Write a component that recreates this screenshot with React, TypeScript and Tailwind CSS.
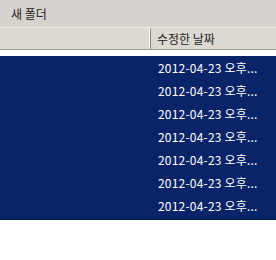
const rows = Array.from({ length: 7 })

export default function App() {
  return (
    <div className="w-[276px] h-[260px] bg-white overflow-hidden font-['Noto_Sans_CJK_KR',sans-serif] text-[12px] leading-none">
      {/* 도구 모음 */}
      <div className="h-[27px] bg-[#d6d3ce] flex items-center pl-[11px] text-[#222]">새 폴더</div>
      <div className="h-px bg-[#eeece8]" />
      {/* 열 머리글 */}
      <div className="h-[22px] bg-[#dcd9d2] flex border-b border-[#9d9a92]">
        <div className="w-[150px] border-r border-[#fafafa]" />
        <div className="flex-1 flex items-center pl-[6px] border-l border-[#8c8a84] text-[#222]">수정한 날짜</div>
      </div>
      <div className="h-[6px]" />
      {/* 선택된 항목 */}
      <div className="bg-[#0a246a] border-b border-[#061646] pb-[2px]">
        {rows.map((_, i) => (
          <div key={i} className="h-[23px] flex items-center pl-[158px] text-white tracking-[0.2px]">
            2012-04-23 오후...
          </div>
        ))}
      </div>
    </div>
  )
}
